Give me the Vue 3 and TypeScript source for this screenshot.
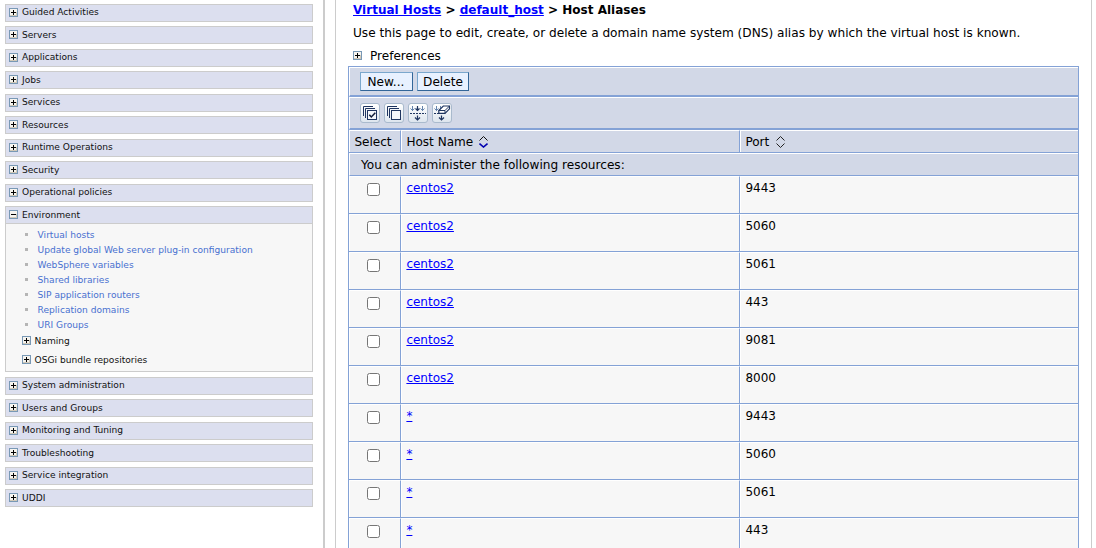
<script setup lang="ts">
import { h } from 'vue'

interface Section { name: string; short?: boolean }

const toSections = (names: string[]): Section[] =>
  names.map((name, i) => ({ name, short: i % 2 === 0 }))

const before = toSections([
  'Guided Activities', 'Servers', 'Applications', 'Jobs', 'Services',
  'Resources', 'Runtime Operations', 'Security', 'Operational policies',
])

const after = toSections([
  'System administration', 'Users and Groups', 'Monitoring and Tuning',
  'Troubleshooting', 'Service integration', 'UDDI',
])

const links: string[] = [
  'Virtual hosts', 'Update global Web server plug-in configuration', 'WebSphere variables',
  'Shared libraries', 'SIP application routers', 'Replication domains', 'URI Groups',
]

const rows: { host: string; port: string }[] = [
  { host: 'centos2', port: '9443' }, { host: 'centos2', port: '5060' },
  { host: 'centos2', port: '5061' }, { host: 'centos2', port: '443' },
  { host: 'centos2', port: '9081' }, { host: 'centos2', port: '8000' },
  { host: '*', port: '9443' }, { host: '*', port: '5060' },
  { host: '*', port: '5061' }, { host: '*', port: '443' },
]

const Toggle = (props: { open?: boolean }) =>
  h('svg', { class: 'toggle', width: 9, height: 9, viewBox: '0 0 9 9', 'shape-rendering': 'crispEdges' }, [
    h('rect', { x: 0.5, y: 0.5, width: 8, height: 8, fill: '#f6f4ef', stroke: '#7898b5' }),
    h('path', { d: 'M1 7.5h7M7.5 4v4', stroke: '#d0c8b8', fill: 'none' }),
    h('path', { d: props.open ? 'M2 4.5h5' : 'M2 4.5h5M4.5 2v5', stroke: '#000', fill: 'none' }),
  ])
Toggle.props = { open: Boolean }
</script>

<template>
  <div class="page">
    <nav class="side">
      <div v-for="s in before" :key="s.name" class="bar" :class="{ short: s.short }">
        <Toggle /><span>{{ s.name }}</span>
      </div>
      <div class="group">
        <div class="bar head"><Toggle open /><span>Environment</span></div>
        <ul>
          <li v-for="l in links" :key="l"><i></i><a>{{ l }}</a></li>
        </ul>
        <div class="sub"><Toggle /><span>Naming</span></div>
        <div class="sub second"><Toggle /><span>OSGi bundle repositories</span></div>
      </div>
      <div v-for="s in after" :key="s.name" class="bar" :class="{ short: s.short }">
        <Toggle /><span>{{ s.name }}</span>
      </div>
    </nav>
    <div class="divider"></div>
    <main>
      <h1><a>Virtual Hosts</a> &gt; <a>default_host</a> &gt; Host Aliases</h1>
      <p>Use this page to edit, create, or delete a domain name system (DNS) alias by which the virtual host is known.</p>
      <div class="prefs"><Toggle /><span>Preferences</span></div>
      <section class="table">
        <div class="band buttons"><button class="new">New...</button><button>Delete</button></div>
        <div class="band tools">
          <span class="tool"><svg width="18" height="18" viewBox="0 0 18 18">
            <path d="M2.5 12v-9.5h9.5M4.5 14v-9.5h9.5" /><rect x="6.5" y="6.5" width="9" height="9" fill="#f4f7fb" /><path d="M8.3 10.8l2 2.2 4-4.2" class="heavy" />
          </svg></span>
          <span class="tool"><svg width="18" height="18" viewBox="0 0 18 18">
            <path d="M2.5 12v-9.5h9.5M4.5 14v-9.5h9.5" /><rect x="6.5" y="6.5" width="9" height="9" fill="#f4f7fb" />
          </svg></span>
          <span class="tool"><svg width="18" height="18" viewBox="0 0 18 18">
            <path d="M1 9.5h16" stroke-dasharray="2 1" />
            <path class="light" d="M3.5 2v5M1.5 4.5l2 2 2-2M13.5 2v5M11.5 4.5l2 2 2-2" />
            <path d="M8.5 2v5M6.5 4.5l2 2 2-2M8.5 11.5v5M6 13.5l2.5 2.5 2.5-2.5" class="mid" />
          </svg></span>
          <span class="tool"><svg width="18" height="18" viewBox="0 0 18 18">
            <path d="M1 9.5h5" stroke-dasharray="2 1" />
            <path class="light" d="M3.5 2v5M1.5 4.5l2 2 2-2M7.5 2v3" />
            <path d="M8.5 11.5v5M6 13.5l2.5 2.5 2.5-2.5" class="mid" />
            <path d="M10.3 2h6.2v2.8l-4.5 4.5h-6.2v-2.8z" fill="#fff" class="mid" />
            <path d="M5.8 6.5h6.2l4.500-4.500M12 6.500v2.800" />
          </svg></span>
        </div>
        <div class="row header">
          <div class="cell">Select</div>
          <div class="cell">Host Name
            <svg class="sort" width="9" height="12" viewBox="0 0 9 12"><path d="M.5 4.5l4-4 4 4" stroke="#111" /><path d="M.5 7.5l4 3.5 4-3.5" stroke="#0000b0" stroke-width="1.6" /></svg>
          </div>
          <div class="cell">Port
            <svg class="sort port" width="9" height="12" viewBox="0 0 9 12"><path d="M.5 4.5l4-4 4 4M.5 7.5l4 4 4-4" stroke="#222" /></svg>
          </div>
        </div>
        <div class="band note">You can administer the following resources:</div>
        <div v-for="(r, i) in rows" :key="i" class="row">
          <div class="cell"><input type="checkbox" /></div>
          <div class="cell"><a>{{ r.host }}</a></div>
          <div class="cell">{{ r.port }}</div>
        </div>
      </section>
    </main>
  </div>
</template>

<style>
body { margin: 0; overflow: hidden; background: #fff; }
.toggle { display: block; flex: none; }
</style>

<style scoped>
* { box-sizing: border-box; }
.page { width: 1096px; height: 548px; display: flex; overflow: hidden; font: 12px/16px "DejaVu Sans", sans-serif; color: #000; }
.side { width: 323px; padding: 4px 10px 0 5px; font-size: 9.08px; line-height: 12px; color: #111; flex: none; }
.bar { height: 18px; margin-bottom: 5px; background: #dcdfef; border: 1px solid #ccc; display: flex; align-items: flex-start; gap: 4px; padding: 3px 0 0 3px; }
.bar span { margin-top: -1px; }
.bar.short { margin-bottom: 4px; }
.bar.short span { margin-top: -2px; }
.group { height: 166px; margin-bottom: 5px; background: #f7f7f7; border: 1px solid #ccc; }
.group .bar.head { height: 17px; margin: 0; border-width: 0 0 1px; }
ul { list-style: none; margin: 0; padding: 3px 0 0 19px; }
li { height: 15px; display: flex; align-items: center; gap: 9.6px; }
li i { width: 3px; height: 3px; background: #b5b5b5; }
li a { color: #4870d0; text-decoration: none; }
.sub { display: flex; align-items: center; gap: 3.6px; height: 15px; margin: 1px 0 0 16px; }
.sub.second { margin-top: 4px; }
.divider { width: 2px; background: #ccc; flex: none; }
main { width: 757px; margin-left: 10px; padding: 1px 12px 0; border: solid #ccc; border-width: 0 1px; flex: none; }
h1 { font-size: 12.02px; line-height: 16px; margin: 1px 0 0 5px; }
a { color: #0000ff; text-decoration: underline; }
p { margin: 7px 0 0 5px; font-size: 12.13px; white-space: nowrap; }
.prefs { display: flex; align-items: flex-start; height: 16px; margin: 7px 0 0 5px; gap: 8px; font-size: 12.05px; }
.prefs .toggle { margin-top: 3px; }
.table { width: 731px; margin-top: 2px; border: 1px solid #84a2d6; border-bottom: 0; }
.band { background: #d2d8e7; border-top: 1px solid #fff; border-left: 1px solid #fff; display: flex; }
.buttons { height: 30px; border-bottom: 2px solid #84a2d6; padding: 4px 0 0 10px; gap: 4px; }
button { width: 52px; height: 19px; padding: 1px 0 0; border: 1px solid; border-color: #7aa7cd #336699 #336699 #7aa7cd; background: #e8f1ff; font: 12.12px/16px "DejaVu Sans", sans-serif; color: #000; border-radius: 0; text-align: center; }
button.new { width: 53px; padding-right: 1px; }
.tools { height: 33px; border-bottom: 2px solid #84a2d6; padding: 5px 0 0 10px; gap: 4px; }
.tool { width: 20px; height: 20px; border: 1px solid #a9bacd; border-radius: 3px; background: linear-gradient(#fff, #dde5ee); }
.tool svg { display: block; fill: none; stroke: #1f3560; stroke-width: 1; }
.tool .light { stroke: #6483ac; }
.tool .mid { stroke-width: 1.2; }
.tool .heavy { stroke: #101c38; stroke-width: 1.5; }
.row { display: grid; grid-template-columns: 51px 339px 339px; height: 38px; border-bottom: 1px solid #84a2d6; background: #f7f7f7; }
.cell { border-top: 1px solid #fff; border-left: 1px solid #fff; padding: 3px 0 0 4.4px; }
.cell + .cell { border-left: 1px solid #84a2d6; padding-left: 5.4px; box-shadow: inset 1px 0 #fff; }
.header { height: 23px; background: #d2d8e7; font-size: 12.05px; }
.sort { display: inline-block; vertical-align: -2px; margin-left: 2px; fill: none; }
.sort.port { margin-left: 3px; }
.note { height: 23px; border-bottom: 1px solid #84a2d6; padding: 3px 0 0 11px; font-size: 12.12px; }
input { display: block; width: 13px; height: 13px; margin: 3px 0 0 12.6px; }
</style>
